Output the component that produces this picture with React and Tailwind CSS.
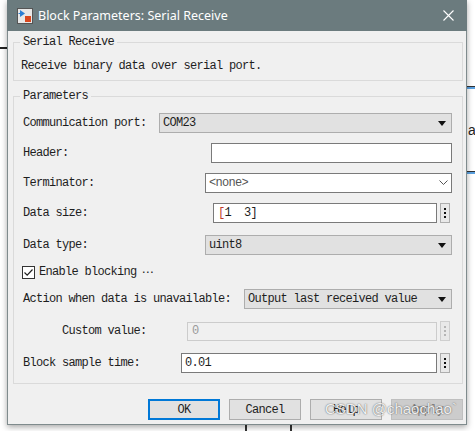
import React from "react";

const T = "font-['Liberation_Mono',monospace] text-[12px] tracking-[-0.7px] leading-[14px] text-[#1e1e1e] whitespace-pre";

function DropArrow() {
  return (
    <svg width="8" height="5" viewBox="0 0 8 5">
      <path d="M0 0H8L4 5Z" fill="#111" />
    </svg>
  );
}

function Chevron() {
  return (
    <svg width="9" height="6" viewBox="0 0 9 6">
      <path d="M0.5 0.5L4.5 4.5L8.5 0.5" fill="none" stroke="#555" strokeWidth="1" />
    </svg>
  );
}

function Dots({ disabled }) {
  const c = disabled ? "bg-[#b5b5b5]" : "bg-[#111]";
  return (
    <div className={`w-[10px] h-[20px] border ${disabled ? "border-[#cfcfcf]" : "border-[#adadad]"} bg-[#e9e9e9] flex flex-col items-center justify-center gap-[2px]`}>
      <div className={`w-[2px] h-[2px] ${c}`} />
      <div className={`w-[2px] h-[2px] ${c}`} />
      <div className={`w-[2px] h-[2px] ${c}`} />
    </div>
  );
}

function Select({ w, text }) {
  return (
    <div className={`${w} h-[20px] border border-[#adadad] bg-[#e1e1e1] flex items-center justify-between pl-[3px] pr-[5px]`}>
      <span className={T}>{text}</span>
      <DropArrow />
    </div>
  );
}

function Row({ mt, label, labelPl = "", children }) {
  return (
    <div className={`${mt} h-[20px] flex items-center justify-between`}>
      <span className={`${T} ${labelPl}`}>{label}</span>
      <div className="flex items-center">{children}</div>
    </div>
  );
}

function Btn({ children, kind }) {
  let cls = "border border-[#adadad] bg-[#e1e1e1]";
  let tc = "#1e1e1e";
  if (kind === "ok") cls = "border-2 border-[#0078d7] bg-[#e1e1e1]";
  if (kind === "dis") {
    cls = "border border-[#bfbfbf] bg-[#cccccc]";
    tc = "#838383";
  }
  return (
    <div className={`w-[72px] h-[21px] flex items-center justify-center ${cls}`}>
      <span className={T} style={{ color: tc }}>{children}</span>
    </div>
  );
}

export default function App() {
  return (
    <div className="relative w-[475px] h-[431px] bg-white overflow-hidden">
      {/* background canvas bits */}
      <div className="absolute left-0 top-[47px] w-[8px] h-[2px] bg-[#222]" />
      <div className="absolute left-[466px] top-[86px] w-[9px] h-[1px] bg-[#333]" />
      <div className="absolute left-[466px] top-[87px] w-[9px] h-[2px] bg-[#5aa0e0]" />
      <div className="absolute left-[468px] top-[122px] font-['Liberation_Sans',sans-serif] text-[14px] leading-[16px] text-[#222]">a</div>
      <div className="absolute left-[466px] top-[171px] w-[9px] h-[1px] bg-[#333]" />
      <div className="absolute left-[466px] top-[172px] w-[9px] h-[2px] bg-[#5aa0e0]" />
      <div className="absolute left-[245px] top-[420px] w-[2px] h-[11px] bg-[#333]" />
      <div className="absolute left-[290px] top-[420px] w-[2px] h-[11px] bg-[#333]" />

      <div className="relative pl-[7px]">
        <div className="w-[460px] flex flex-col shadow-[0_2px_6px_rgba(0,0,0,0.35)]">
          {/* title bar */}
          <div className="h-[31px] bg-[#6b7b7e] flex items-center pl-[10px] pr-[10px]">
            <svg width="16" height="16" viewBox="0 0 16 16">
              <rect x="0.5" y="0.5" width="15" height="15" fill="#e8e8e8" stroke="#555" />
              <path d="M3 2V9L8 5.5Z" fill="#2a7fd4" />
              <path d="M1.5 5.5H3" stroke="#2a7fd4" />
              <rect x="8" y="8" width="6" height="6" fill="#d9481f" />
            </svg>
            <span className="ml-[5px] font-['Noto_Sans',sans-serif] text-[12.5px] leading-[16px] text-white">
              Block Parameters: Serial Receive
            </span>
            <svg className="ml-auto mr-[3px]" width="11" height="11" viewBox="0 0 11 11">
              <path d="M0.5 0.5L10.5 10.5M10.5 0.5L0.5 10.5" stroke="#fff" strokeWidth="1.1" />
            </svg>
          </div>

          {/* body */}
          <div className="bg-[#f0f0f0] border-x border-b border-[#7f8b8d] pl-[5px] pr-[3px] pb-[4px]">
            <fieldset className="mt-[4px] border border-[#dadada] pl-[7px] pb-[7px]">
              <legend className={`${T} px-[3px] ml-[-1px]`}>Serial Receive</legend>
              <div className={`${T} pt-[10px]`}>Receive binary data over serial port.</div>
            </fieldset>

            <fieldset className="mt-[8px] border border-[#dadada] pl-[9px] pr-[10px] pb-[10px]">
              <legend className={`${T} px-[3px] ml-[-3px]`}>Parameters</legend>

              <Row mt="mt-[10px]" label="Communication port:">
                <Select w="w-[293px]" text="COM23" />
              </Row>

              <Row mt="mt-[10px]" label="Header:">
                <div className="w-[241px] h-[20px] border border-[#7a7a7a] bg-white" />
              </Row>

              <Row mt="mt-[10px]" label="Terminator:">
                <div className="w-[247px] h-[20px] border border-[#7a7a7a] bg-white flex items-center justify-between pl-[3px] pr-[3px]">
                  <span className={`${T} text-[#555]`}>&lt;none&gt;</span>
                  <Chevron />
                </div>
              </Row>

              <Row mt="mt-[10px]" label="Data size:">
                <div className="w-[224px] h-[20px] border border-[#7a7a7a] bg-white flex items-center pl-[4px]">
                  <span className={T}><span className="text-[#c0392b]">[</span>1  3]</span>
                </div>
                <div className="ml-[3px] mr-[2px]"><Dots /></div>
              </Row>

              <Row mt="mt-[12px]" label="Data type:">
                <Select w="w-[247px]" text="uint8" />
              </Row>

              <div className="mt-[7px] h-[20px] flex items-center">
                <div className="ml-[-1px] w-[13px] h-[13px] border border-[#333] bg-white flex items-center justify-center">
                  <svg width="11" height="11" viewBox="0 0 11 11">
                    <path d="M1.5 5.5L4.2 8.2L9.5 2.5" fill="none" stroke="#222" strokeWidth="1.2" />
                  </svg>
                </div>
                <span className={`${T} ml-[4px]`}>Enable blocking</span>
                <span className="font-['DejaVu_Sans',sans-serif] text-[12px] leading-[14px] text-[#222] ml-[5px]">⋯</span>
              </div>

              <Row mt="mt-[7px]" label="Action when data is unavailable:">
                <Select w="w-[208px]" text="Output last received value" />
              </Row>

              <Row mt="mt-[12px]" label="Custom value:" labelPl="pl-[39px]">
                <div className="w-[250px] h-[19px] border border-[#cccccc] bg-[#f0f0f0] flex items-center pl-[4px]">
                  <span className={`${T} text-[#9a9a9a]`}>0</span>
                </div>
                <div className="ml-[3px] mr-[2px]"><Dots disabled /></div>
              </Row>

              <Row mt="mt-[12px]" label="Block sample time:">
                <div className="w-[256px] h-[20px] border border-[#7a7a7a] bg-white flex items-center pl-[3px]">
                  <span className={T}>0.01</span>
                </div>
                <div className="ml-[3px] mr-[2px]"><Dots /></div>
              </Row>
            </fieldset>

            <div className="mt-[15px] flex justify-end gap-[9px]">
              <Btn kind="ok">OK</Btn>
              <Btn>Cancel</Btn>
              <Btn>Help</Btn>
              <Btn kind="dis">Apply</Btn>
            </div>
          </div>
        </div>
      </div>

      {/* watermark */}
      <div className="absolute left-[325px] top-[400px] font-['Liberation_Sans',sans-serif] text-[15px] leading-[18px] text-white/90 [text-shadow:0_0_1px_rgba(0,0,0,0.5),0_0_2px_rgba(0,0,0,0.3)]">
        CSDN @chaochao`
      </div>
    </div>
  );
}
